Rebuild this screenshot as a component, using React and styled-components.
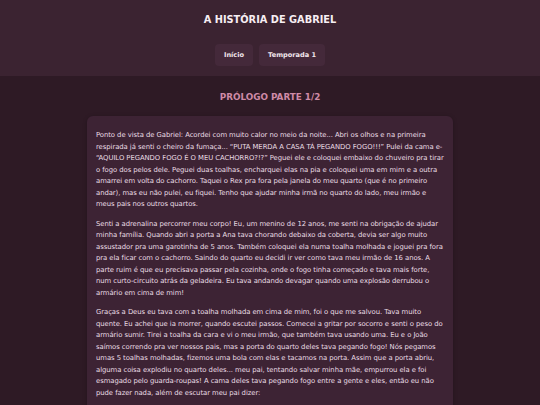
import React from 'react';
import styled, { createGlobalStyle } from 'styled-components';

const GlobalStyle = createGlobalStyle`
  html, body {
    margin: 0;
    padding: 0;
    background: #2e1a25;
  }
  body {
    font-family: "DejaVu Sans", "Noto Sans", sans-serif;
    color: #f1e6ec;
  }
`;

const Header = styled.header`
  background: #3b2331;
  height: 76px;
  box-sizing: border-box;
  padding-top: 13px;
  display: flex;
  flex-direction: column;
  align-items: center;
`;

const Title = styled.h1`
  margin: 0;
  font-size: 9.8px;
  font-weight: 700;
  line-height: 13px;
  color: #f7eef3;
`;

const Nav = styled.nav`
  display: flex;
  gap: 6px;
  margin-top: 18px;
`;

const NavButton = styled.a`
  display: flex;
  align-items: center;
  height: 22px;
  padding: 0 9px;
  border-radius: 4px;
  background: #44293a;
  font-size: 6.6px;
  font-weight: 700;
  color: #f1e6ec;
  cursor: pointer;
`;

const Main = styled.main`
  display: flex;
  flex-direction: column;
  align-items: center;
`;

const SectionTitle = styled.h2`
  margin: 15px 0 0;
  font-size: 8.8px;
  font-weight: 700;
  line-height: 12px;
  color: #cf8aa7;
`;

const Card = styled.article`
  width: 366px;
  box-sizing: border-box;
  margin-top: 13px;
  padding: 14px 8px 10px 9px;
  background: #3d2334;
  border-radius: 6px;
  box-shadow: 0 1px 4px rgba(0, 0, 0, 0.25);
`;

const Paragraph = styled.p`
  margin: 0 0 8px;
  font-size: 6.85px;
  line-height: 11.5px;
  letter-spacing: -0.055px;
  color: #eadde4;
  padding-left: ${(p) => (p.$dialogue ? '6px' : '0')};
`;

const paragraphs = [
  'Ponto de vista de Gabriel: Acordei com muito calor no meio da noite... Abri os olhos e na primeira respirada já senti o cheiro da fumaça... “PUTA MERDA A CASA TÁ PEGANDO FOGO!!!” Pulei da cama e- “AQUILO PEGANDO FOGO É O MEU CACHORRO?!?” Peguei ele e coloquei embaixo do chuveiro pra tirar o fogo dos pelos dele. Peguei duas toalhas, encharquei elas na pia e coloquei uma em mim e a outra amarrei em volta do cachorro. Taquei o Rex pra fora pela janela do meu quarto (que é no primeiro andar), mas eu não pulei, eu fiquei. Tenho que ajudar minha irmã no quarto do lado, meu irmão e meus pais nos outros quartos.',
  'Senti a adrenalina percorrer meu corpo! Eu, um menino de 12 anos, me senti na obrigação de ajudar minha família. Quando abri a porta a Ana tava chorando debaixo da coberta, devia ser algo muito assustador pra uma garotinha de 5 anos. Também coloquei ela numa toalha molhada e joguei pra fora pra ela ficar com o cachorro. Saindo do quarto eu decidi ir ver como tava meu irmão de 16 anos. A parte ruim é que eu precisava passar pela cozinha, onde o fogo tinha começado e tava mais forte, num curto-circuito atrás da geladeira. Eu tava andando devagar quando uma explosão derrubou o armário em cima de mim!',
  'Graças a Deus eu tava com a toalha molhada em cima de mim, foi o que me salvou. Tava muito quente. Eu achei que ia morrer, quando escutei passos. Comecei a gritar por socorro e senti o peso do armário sumir. Tirei a toalha da cara e vi o meu irmão, que também tava usando uma. Eu e o João saímos correndo pra ver nossos pais, mas a porta do quarto deles tava pegando fogo! Nós pegamos umas 5 toalhas molhadas, fizemos uma bola com elas e tacamos na porta. Assim que a porta abriu, alguma coisa explodiu no quarto deles... meu pai, tentando salvar minha mãe, empurrou ela e foi esmagado pelo guarda-roupas! A cama deles tava pegando fogo entre a gente e eles, então eu não pude fazer nada, além de escutar meu pai dizer:',
];

const App = () => (
  <>
    <GlobalStyle />
    <Header>
      <Title>A HISTÓRIA DE GABRIEL</Title>
      <Nav>
        <NavButton>Início</NavButton>
        <NavButton>Temporada 1</NavButton>
      </Nav>
    </Header>
    <Main>
      <SectionTitle>PRÓLOGO PARTE 1/2</SectionTitle>
      <Card>
        {paragraphs.map((text) => (
          <Paragraph key={text.slice(0, 20)}>{text}</Paragraph>
        ))}
        <Paragraph $dialogue>— EU VOU MORRER, FILHO...</Paragraph>
      </Card>
    </Main>
  </>
);

export default App;
